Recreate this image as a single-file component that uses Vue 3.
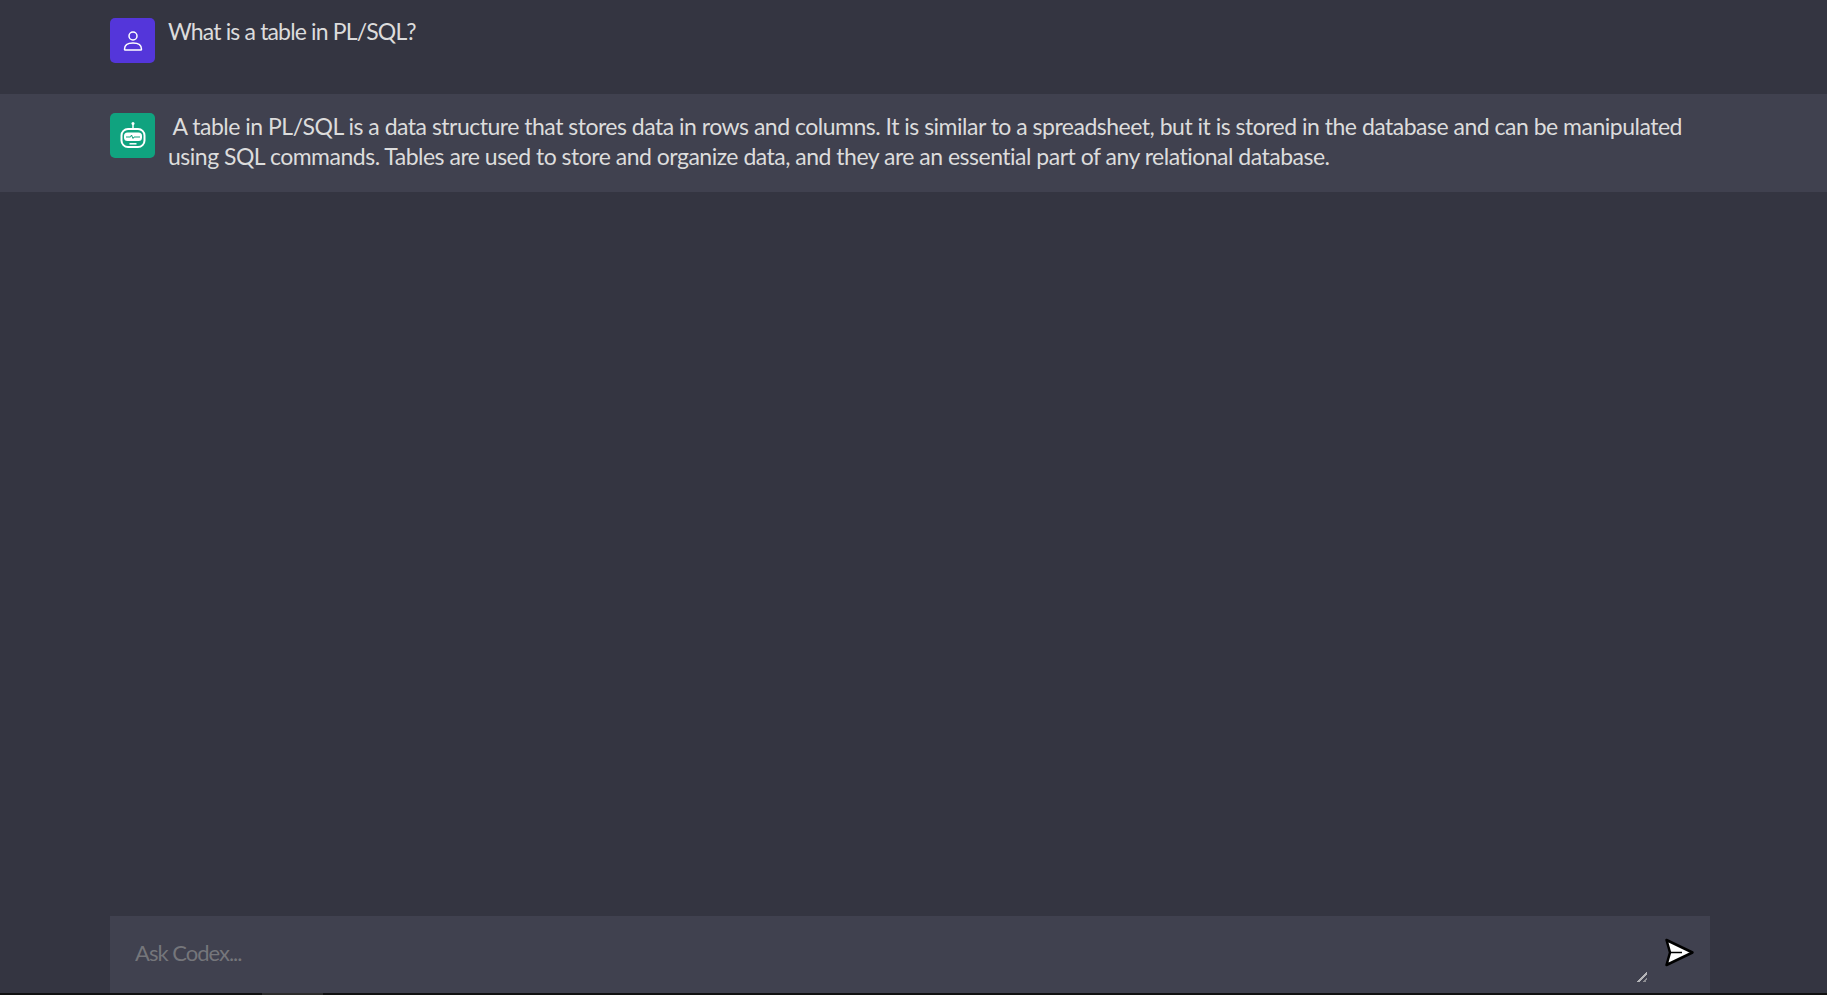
<template>
  <div class="page">
    <div class="chat">
      <div class="row">
        <div class="avatar user">
          <svg width="24" height="24" viewBox="0 0 24 24" fill="none" stroke="#fff" stroke-width="1.5">
            <circle cx="12" cy="7" r="4" />
            <path d="M3.5 20.2c0-4 3.4-6.2 8.5-6.2s8.5 2.2 8.5 6.2c0 .5-.3.8-.8.8H4.300c-.5 0-.8-.3-.8-.8z" />
          </svg>
        </div>
        <div class="message short">What is a table in PL/SQL?</div>
      </div>
      <div class="row ai">
        <div class="avatar bot">
          <svg width="30" height="30" viewBox="0 0 30 30" fill="none" stroke="#fff">
            <circle cx="15" cy="2.500" r="1.500" fill="#fff" stroke="none" />
            <path d="M15 3v5" stroke-width="1.500" />
            <rect x="3.500" y="8" width="23" height="18" rx="6.500" stroke-width="2" />
            <rect x="6" y="11.500" width="18" height="8.500" rx="3.500" fill="#fff" stroke="none" />
            <path d="M8 16h4.500l1-2 1.500 3.500 1-1.500h6" stroke="#10a37f" stroke-width="1" />
            <path d="M11.500 22.800h7" stroke-width="1.500" />
          </svg>
        </div>
        <div class="message"> &nbsp;A table in PL/SQL is a data structure that stores data in rows and columns. It is similar to a spreadsheet, but it is stored in the database and can be manipulated using SQL commands. Tables are used to store and organize data, and they are an essential part of any relational database.</div>
      </div>
    </div>
    <form class="composer" @submit.prevent>
      <textarea class="prompt" rows="1" placeholder="Ask Codex..."></textarea>
      <button class="send" type="submit" aria-label="Send">
        <svg width="32" height="32" viewBox="0 0 32 32">
          <path d="M2.500 3 28.500 15.500 2.500 28 6 15.500z" fill="#fff" stroke="#000" stroke-width="2.500" stroke-linejoin="round" />
          <path d="M6 15.500H18" stroke="#000" stroke-width="1.500" />
        </svg>
      </button>
    </form>
    <div class="strip"><span class="tab"></span></div>
  </div>
</template>

<script setup>
</script>

<style>
html,
body {
  margin: 0;
  background: #343541;
}
</style>

<style scoped>
.page {
  height: 995px;
  display: flex;
  flex-direction: column;
  background: #343541;
  font-family: Lato, "Liberation Sans", sans-serif;
  color: #dcdcdc;
  overflow: hidden;
}

.chat {
  flex: 1;
}

.row {
  display: flex;
  gap: 13px;
  padding: 18px 110px 0;
  height: 76px;
}

.row.ai {
  background: #40414f;
  padding-top: 17px;
  height: 81px;
}

.avatar {
  flex: none;
  width: 45px;
  height: 45px;
  border-radius: 5px;
  display: flex;
  align-items: center;
  justify-content: center;
}

.ai .avatar {
  margin-top: 2px;
}

.user {
  background: #5436da;
}

.bot {
  background: #10a37f;
}

.message {
  font-size: 23px;
  line-height: 30px;
  letter-spacing: -0.5px;
  padding-right: 20px;
}

.message.short {
  margin-top: -2px;
  letter-spacing: -0.85px;
}

.composer {
  margin: 0 117px 0 110px;
  height: 77px;
  background: #40414f;
  display: flex;
  padding-right: 14px;
  flex: none;
}

.prompt {
  flex: 1;
  margin: 18px 17px 0 25px;
  padding: 4px 0 0;
  height: 44px;
  background: transparent;
  border: none;
  outline: none;
  color: #dcdcdc;
  font-family: inherit;
  font-size: 22px;
  line-height: 30px;
  letter-spacing: -1px;
}

.prompt::placeholder {
  color: #75767b;
}

.prompt::-webkit-resizer {
  background:
    linear-gradient(135deg, transparent 46%, #b5b5b8 46%, #b5b5b8 64%, transparent 64%) right bottom / 10px 10px no-repeat,
    linear-gradient(135deg, transparent 76%, #8d8d92 76%, #8d8d92 90%, transparent 90%) right bottom / 10px 10px no-repeat;
}

.send {
  width: 32px;
  height: 32px;
  margin-top: 21px;
  padding: 0;
  background: none;
  border: none;
}

.strip {
  flex: none;
  height: 2px;
  background: #111;
}

.tab {
  display: block;
  width: 61px;
  height: 2px;
  margin-left: 262px;
  background: #2d2d2d;
}
</style>
